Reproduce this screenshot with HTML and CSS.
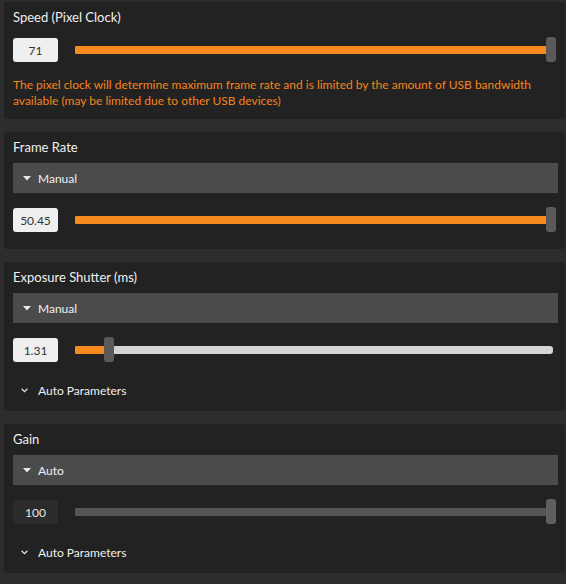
FILE: index.html
```html
<!DOCTYPE html>
<html lang="en">
<head>
<meta charset="utf-8">
<title>Camera Settings</title>
<link rel="stylesheet" href="styles.css">
</head>
<body>
<div class="page">
  <section class="panel panel-speed">
    <div class="title">Speed (Pixel Clock)</div>
    <div class="row">
      <div class="num">71</div>
      <div class="slider">
        <div class="track"><div class="fill" style="width:98.54%"></div></div>
        <div class="thumb" style="left:98.54%"></div>
      </div>
    </div>
    <p class="note">The pixel clock will determine maximum frame rate and is limited by the amount of USB bandwidth available (may be limited due to other USB devices)</p>
  </section>

  <section class="panel">
    <div class="title">Frame Rate</div>
    <div class="dropdown">
      <svg class="caret" width="8" height="5" viewBox="0 0 8 5"><path d="M0 0H8L4 4.5Z"/></svg>
      <span>Manual</span>
    </div>
    <div class="row">
      <div class="num">50.45</div>
      <div class="slider">
        <div class="track"><div class="fill" style="width:98.54%"></div></div>
        <div class="thumb" style="left:98.54%"></div>
      </div>
    </div>
  </section>

  <section class="panel panel-auto">
    <div class="title">Exposure Shutter (ms)</div>
    <div class="dropdown">
      <svg class="caret" width="8" height="5" viewBox="0 0 8 5"><path d="M0 0H8L4 4.5Z"/></svg>
      <span>Manual</span>
    </div>
    <div class="row">
      <div class="num">1.31</div>
      <div class="slider">
        <div class="track"><div class="fill" style="width:6.07%"></div></div>
        <div class="thumb" style="left:6.07%"></div>
      </div>
    </div>
    <div class="auto">
      <svg class="chevron" width="7" height="5" viewBox="0 0 7 5"><path d="M0.6 0.8L3.5 3.7L6.4 0.8"/></svg>
      <span>Auto Parameters</span>
    </div>
  </section>

  <section class="panel panel-auto">
    <div class="title">Gain</div>
    <div class="dropdown">
      <svg class="caret" width="8" height="5" viewBox="0 0 8 5"><path d="M0 0H8L4 4.5Z"/></svg>
      <span>Auto</span>
    </div>
    <div class="row">
      <div class="num num-disabled">100</div>
      <div class="slider">
        <div class="track track-disabled"><div class="fill" style="width:98.54%"></div></div>
        <div class="thumb thumb-disabled" style="left:98.54%"></div>
      </div>
    </div>
    <div class="auto">
      <svg class="chevron" width="7" height="5" viewBox="0 0 7 5"><path d="M0.6 0.8L3.5 3.7L6.4 0.8"/></svg>
      <span>Auto Parameters</span>
    </div>
  </section>
</div>
</body>
</html>
```

FILE: styles.css
```css
html, body {
  margin: 0;
  padding: 0;
}

body {
  width: 566px;
  height: 584px;
  overflow: hidden;
  background: #2d2d2d;
  color: #f0f0f0;
  font-family: Lato, "Liberation Sans", sans-serif;
}

.page {
  display: flex;
  flex-direction: column;
  gap: 13px;
  padding: 2px 1px 0 4px;
}

.panel {
  background: #222222;
  border-radius: 3px;
  padding: 6px 7px 16px 9px;
}

.panel-speed {
  padding-bottom: 10px;
}

.panel-auto {
  padding-bottom: 10px;
}

.title {
  font-size: 13px;
  line-height: 18px;
  margin-bottom: 7px;
}

.panel-speed .title {
  margin-bottom: 11px;
}

.dropdown {
  height: 30px;
  background: #4b4b4b;
  display: flex;
  align-items: center;
  gap: 7px;
  padding-left: 10px;
  margin-bottom: 14px;
  font-size: 12px;
}

.caret {
  fill: #e8e8e8;
  flex: none;
}

.row {
  display: flex;
  align-items: center;
  height: 26px;
}

.num {
  flex: none;
  width: 45px;
  height: 24px;
  border-radius: 3px;
  background: #efefef;
  color: #333333;
  font-size: 12px;
  display: flex;
  align-items: center;
  justify-content: center;
}

.num-disabled {
  background: #2c2c2c;
  color: #e6e6e6;
}

.slider {
  flex: 1;
  margin-left: 17px;
  margin-right: 5px;
  height: 26px;
  position: relative;
  display: flex;
  align-items: center;
}

.track {
  width: 100%;
  height: 8px;
  background: #d4d4d4;
  border-radius: 2px 3px 3px 2px;
  overflow: hidden;
  display: flex;
}

.fill {
  height: 100%;
  background: #f68a1f;
}

.track-disabled,
.track-disabled .fill {
  background: #555555;
}

.thumb {
  position: absolute;
  top: 0;
  width: 10px;
  height: 25px;
  border-radius: 3px;
  background: #5a5a5a;
}

.thumb-disabled {
  background: #5f5f5f;
}

.note {
  margin: 14px 0 0;
  font-size: 12px;
  line-height: 16px;
  color: #f5841f;
}

.auto {
  margin-top: 16px;
  height: 22px;
  display: flex;
  align-items: center;
  gap: 10px;
  padding-left: 8px;
  font-size: 12px;
}

.chevron {
  flex: none;
  fill: none;
  stroke: #e0e0e0;
  stroke-width: 1.3;
}
```
